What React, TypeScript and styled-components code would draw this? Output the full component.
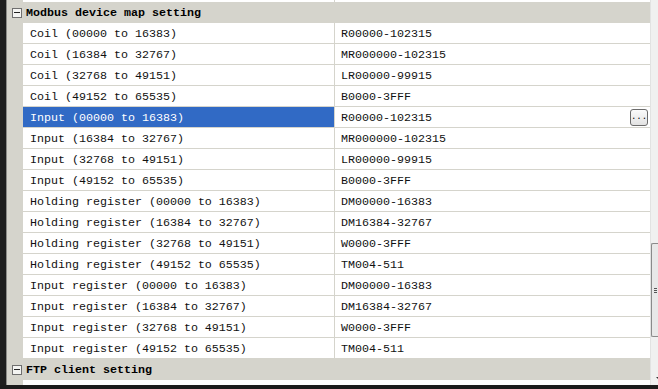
import React from "react";
import styled, { createGlobalStyle } from "styled-components";

const GlobalStyle = createGlobalStyle`
  html, body {
    margin: 0;
    padding: 0;
    background: #1b1b1b;
  }
`;

const mono = `"Liberation Mono", "Courier New", monospace`;

const Frame = styled.div`
  width: 658px;
  height: 389px;
  overflow: hidden;
  background: #1b1b1b;
  display: flex;
  flex-direction: column;
`;

const Body = styled.div`
  height: 385px;
  display: flex;
`;

const DarkEdge = styled.div`
  width: 6px;
  background: #1e1e1e;
`;

const Panel = styled.section`
  flex: 1;
  display: flex;
  flex-direction: column;
  border-left: 1px solid #8c8c88;
  background: #d5d4cc;
  font-family: ${mono};
  font-size: 11.67px;
  color: #000;
`;

const Row = styled.div<{ h?: number }>`
  display: grid;
  grid-template-columns: 16px 312px 1fr;
  height: ${({ h }) => h ?? 21}px;
  flex: none;
`;

const Gutter = styled.div`
  background: #d5d4cc;
`;

const NameCell = styled.div<{ selected?: boolean }>`
  display: flex;
  align-items: center;
  padding: 1px 0 0 7px;
  white-space: pre;
  border-right: 1px solid #d5d4cc;
  border-bottom: 1px solid #d5d4cc;
  background: ${({ selected }) => (selected ? "#316ac5" : "#fff")};
  color: ${({ selected }) => (selected ? "#fff" : "#111")};
`;

const ValueCell = styled.div`
  display: flex;
  align-items: center;
  justify-content: space-between;
  padding: 1px 2px 0 6px;
  white-space: pre;
  background: #fff;
  color: #111;
  border-bottom: 1px solid #d5d4cc;
`;

const SliverName = styled.div`
  background: #fff;
  border-right: 1px solid #d5d4cc;
`;

const SliverValue = styled.div`
  background: #fff;
`;

const Category = styled.div`
  display: flex;
  align-items: center;
  height: 21px;
  padding-top: 1px;
  box-sizing: border-box;
  flex: none;
  background: #d5d4cc;
  font-weight: bold;
`;

const Toggle = styled.span`
  box-sizing: border-box;
  width: 10px;
  height: 10px;
  margin: -1px 4px 0 5px;
  border: 1px solid #6f6f6f;
  background: #f4f4f2;
  display: flex;
  align-items: center;
  justify-content: center;
  &::after {
    content: "";
    width: 6px;
    height: 1px;
    background: #222;
  }
`;

const EllipsisButton = styled.button`
  box-sizing: border-box;
  width: 18px;
  height: 17px;
  margin-top: -1px;
  padding: 0 0 3px;
  border: 1px solid #6b6b6b;
  border-radius: 3px;
  background: linear-gradient(#fbfbfb, #e2e2e2);
  font-family: ${mono};
  font-size: 9px;
  line-height: 1;
  display: flex;
  align-items: flex-end;
  justify-content: center;
  color: #000;
`;

const Filler = styled.div`
  flex: 1;
  display: grid;
  grid-template-columns: 16px 1fr;
`;

const Scrollbar = styled.div`
  width: 8px;
  background: #f0f0f0;
  border-left: 1px solid #e2e2e2;
  box-sizing: border-box;
  display: flex;
  flex-direction: column;
  padding-top: 243px;
`;

const Thumb = styled.div`
  height: 94px;
  box-sizing: border-box;
  border: 1px solid #8a8a8a;
  border-right: none;
  border-radius: 2px 0 0 2px;
  background: #e8e8e8;
  display: flex;
  align-items: center;
  justify-content: center;
`;

const Grip = styled.div`
  width: 3px;
  height: 5px;
  background: repeating-linear-gradient(#555 0 1px, transparent 1px 2px);
`;

const ArrowDown = styled.div`
  margin-top: auto;
  margin-bottom: 6px;
  align-self: flex-end;
  width: 0;
  height: 0;
  border-left: 2px solid transparent;
  border-top: 2px solid #333;
`;

const rows: [string, string][] = [
  ["Coil (00000 to 16383)", "R00000-102315"],
  ["Coil (16384 to 32767)", "MR000000-102315"],
  ["Coil (32768 to 49151)", "LR00000-99915"],
  ["Coil (49152 to 65535)", "B0000-3FFF"],
  ["Input (00000 to 16383)", "R00000-102315"],
  ["Input (16384 to 32767)", "MR000000-102315"],
  ["Input (32768 to 49151)", "LR00000-99915"],
  ["Input (49152 to 65535)", "B0000-3FFF"],
  ["Holding register (00000 to 16383)", "DM00000-16383"],
  ["Holding register (16384 to 32767)", "DM16384-32767"],
  ["Holding register (32768 to 49151)", "W0000-3FFF"],
  ["Holding register (49152 to 65535)", "TM004-511"],
  ["Input register (00000 to 16383)", "DM00000-16383"],
  ["Input register (16384 to 32767)", "DM16384-32767"],
  ["Input register (32768 to 49151)", "W0000-3FFF"],
  ["Input register (49152 to 65535)", "TM004-511"],
];

const SELECTED = 4;

export default function App() {
  return (
    <>
      <GlobalStyle />
      <Frame>
        <Body>
          <DarkEdge />
          <Panel>
            <Row h={2}>
              <Gutter />
              <SliverName />
              <SliverValue />
            </Row>
            <Category>
              <Toggle />
              Modbus device map setting
            </Category>
            {rows.map(([name, value], i) => (
              <Row key={name}>
                <Gutter />
                <NameCell selected={i === SELECTED}>{name}</NameCell>
                <ValueCell>
                  <span>{value}</span>
                  {i === SELECTED && <EllipsisButton>...</EllipsisButton>}
                </ValueCell>
              </Row>
            ))}
            <Category>
              <Toggle />
              FTP client setting
            </Category>
            <Filler>
              <Gutter />
              <SliverValue />
            </Filler>
          </Panel>
          <Scrollbar>
            <Thumb>
              <Grip />
            </Thumb>
            <ArrowDown />
          </Scrollbar>
        </Body>
      </Frame>
    </>
  );
}
